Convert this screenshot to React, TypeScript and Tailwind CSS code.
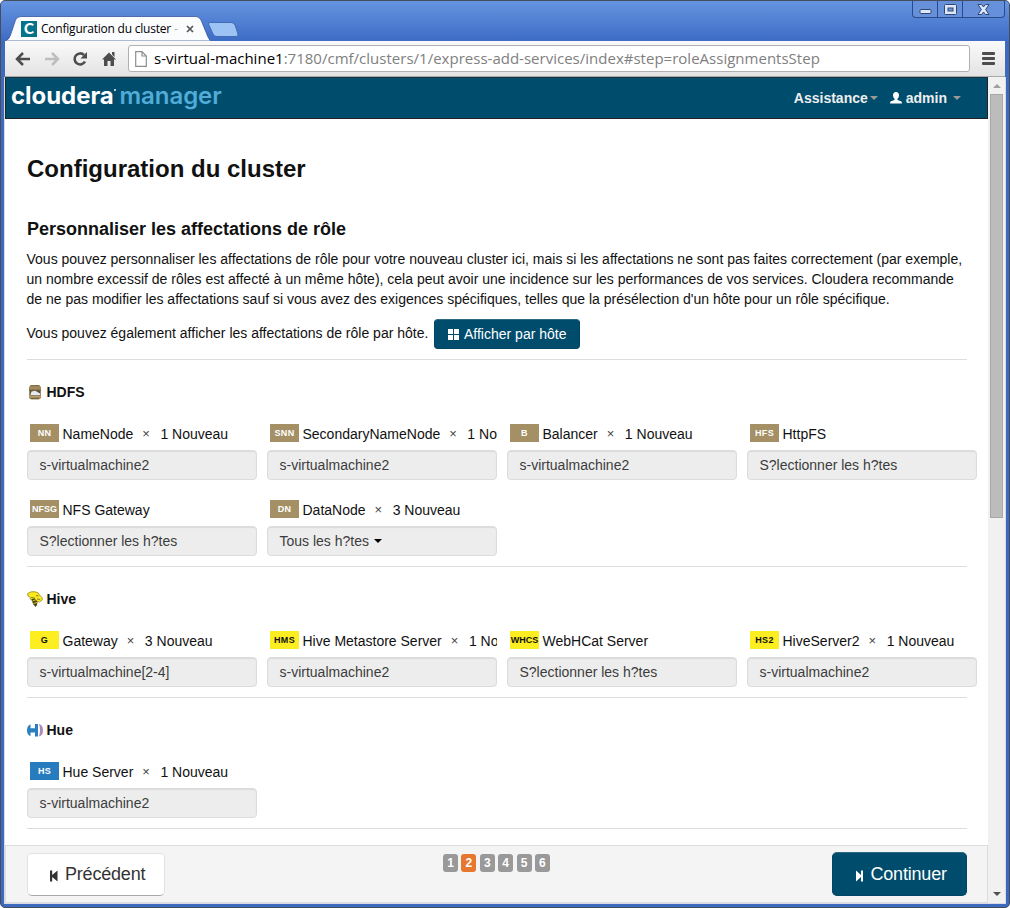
import type { ReactNode } from "react";
import clsx from "clsx";

type Role = {
  code: string;
  name: string;
  count?: string;
  hosts: string;
  menu?: boolean;
};

type Service = { title: string; icon: ReactNode; badge: string; roles: Role[] };

const HdfsIcon = () => (
  <svg width="16" height="16" viewBox="0 0 16 16">
    <path d="M4 1h8l2 2v11l-2 1.500H4L2 14V3z" fill="#a08a5e" />
    <path d="M4 1h8l1 1.300H3z" fill="#82704a" />
    <path d="M2 5.500h12V7H2z" fill="#7c6a45" />
    <path d="M3 6.500h10v5H3z" fill="#5b4f36" />
    <path d="M3.500 10.500l1-3L8 6.800l2 1 3 1.700v1.500H3.500z" fill="#e4ebf0" />
    <path d="M2 11.500h12v1.500H2z" fill="#b59d6e" />
    <path d="M4 14h8v1H4z" fill="#75633f" />
  </svg>
);

const HiveIcon = () => (
  <svg width="16" height="16" viewBox="0 0 16 16">
    <path d="M.6 2.500Q4 0 8 .8Q12 1 12.500 4L15 6.500L15.300 9L12.500 11L8.500 10L4 9L2.500 5.500L1 5z" fill="#fbe91c" stroke="#958b2b" strokeWidth=".8" />
    <path d="M4 6.500l4 .5M9 4.500l2.500.5M10 8l3 .5" stroke="#6d641d" strokeWidth=".8" />
    <path d="M4.500 8L8 7.500l2.500 3.500-.5 3-1.500 2L6 13z" fill="#4a441a" />
    <path d="M5.500 10l4-1.500M6.500 12.500l3.500-1" stroke="#eadb24" strokeWidth=".9" />
  </svg>
);

const HueIcon = () => (
  <svg width="16" height="16" viewBox="0 0 16 16">
    <path d="M3.500 2.300V6.300H8V2H11V14.500H8V10.500H3.500V14.200Q0 12.500 0 8.200Q0 4 3.500 2.300z" fill="#2a7fc0" />
    <path d="M12 2Q16 3 16 8.200Q16 13.500 12 14.500Q14 8.200 12 2z" fill="#ab8ac0" />
  </svg>
);

const services: Service[] = [
  {
    title: "HDFS",
    icon: <HdfsIcon />,
    badge: "bg-[#a49064] text-white",
    roles: [
      { code: "NN", name: "NameNode", count: "1 Nouveau", hosts: "s-virtualmachine2" },
      { code: "SNN", name: "SecondaryNameNode", count: "1 No", hosts: "s-virtualmachine2" },
      { code: "B", name: "Balancer", count: "1 Nouveau", hosts: "s-virtualmachine2" },
      { code: "HFS", name: "HttpFS", hosts: "S?lectionner les h?tes" },
      { code: "NFSG", name: "NFS Gateway", hosts: "S?lectionner les h?tes" },
      { code: "DN", name: "DataNode", count: "3 Nouveau", hosts: "Tous les h?tes", menu: true },
    ],
  },
  {
    title: "Hive",
    icon: <HiveIcon />,
    badge: "bg-[#fcee21] text-[#111]",
    roles: [
      { code: "G", name: "Gateway", count: "3 Nouveau", hosts: "s-virtualmachine[2-4]" },
      { code: "HMS", name: "Hive Metastore Server", count: "1 No", hosts: "s-virtualmachine2" },
      { code: "WHCS", name: "WebHCat Server", hosts: "S?lectionner les h?tes" },
      { code: "HS2", name: "HiveServer2", count: "1 Nouveau", hosts: "s-virtualmachine2" },
    ],
  },
  {
    title: "Hue",
    icon: <HueIcon />,
    badge: "bg-[#267cbf] text-white",
    roles: [{ code: "HS", name: "Hue Server", count: "1 Nouveau", hosts: "s-virtualmachine2" }],
  },
];

function RoleField({ role, badge }: { role: Role; badge: string }) {
  return (
    <div className="h-14 w-[230px]">
      <div className="flex h-[26px] items-start overflow-hidden pl-[3px] whitespace-nowrap">
        <span
          className={clsx(
            "flex h-[18px] w-[29px] shrink-0 items-center justify-center text-[9px] leading-[16px] font-bold",
            role.code.length < 4 && "tracking-[0.3px]",
            badge,
          )}
        >
          {role.code}
        </span>
        <span className="ml-[3.500px] leading-[20px]">{role.name}</span>
        {role.count && (
          <>
            <span className="ml-[9px] text-[13px] leading-[20px] text-[#444]">×</span>
            <span className="ml-[10.500px] leading-[20px]">{role.count}</span>
          </>
        )}
      </div>
      <div className="flex h-[30px] items-center rounded-[4px] border border-[#dcdcdc] bg-[#ededed] pl-[11.500px] text-[#3c3c3c] shadow-[inset_0_1px_1px_rgba(0,0,0,0.08)]">
        {role.hosts}
        {role.menu && <span className="ml-[5px] border-x-4 border-t-4 border-x-transparent border-t-black" />}
      </div>
    </div>
  );
}

function ServiceSection({ service }: { service: Service }) {
  return (
    <section className="w-[940px] border-b border-[#dddddd] pb-[10px]">
      <h3 className="flex h-16 items-start gap-[3.500px] pt-[22px] text-[14px] leading-5 font-bold">
        <span className="pt-[2px]">{service.icon}</span>
        {service.title}
      </h3>
      <div className="grid w-[950px] grid-cols-[repeat(4,230px)] gap-x-[10px] gap-y-5">
        {service.roles.map((r) => (
          <RoleField key={r.code} role={r} badge={service.badge} />
        ))}
      </div>
    </section>
  );
}

function TitleBar() {
  return (
    <div className="relative flex h-10 items-end bg-linear-to-b from-[#6594e0] to-[#3e6cc6]">
      <div className="relative ml-1 h-[25px] w-[206px]">
        <svg className="absolute inset-0" width="206" height="25" viewBox="0 0 206 25">
          <path d="M0 25Q4 24 5.500 19L10.500 4Q12 .5 16 .5H191Q194 .5 196 4L203 21Q205 25 206 25z" fill="#fbfcfd" stroke="#39579a" strokeWidth=".8" />
        </svg>
        <div className="relative flex h-full items-center pl-4">
          <span className="flex size-4 items-center justify-center bg-[#047389] font-['Lato',sans-serif] text-[15px] leading-none font-black text-white">C</span>
          <span className="ml-[4px] w-[137px] font-['Open_Sans',sans-serif] text-[12px] leading-5 tracking-[-0.220px] whitespace-nowrap text-black">
            Configuration du cluster <span className="text-[#aaa]">-</span>
          </span>
          <svg className="ml-2" width="8" height="8" viewBox="0 0 8 8">
            <path d="M1 1l6 6M7 1L1 7" stroke="#555" strokeWidth="1.700" />
          </svg>
        </div>
      </div>
      <svg className="mb-[3px] -ml-[4px]" width="33" height="17" viewBox="0 0 33 17">
        <path d="M3 1.500H24Q27 1.500 28 4L31 13Q31.500 15.500 29 15.500H10Q7 15.500 6 13L1.500 3Q1 1.500 3 1.500z" fill="#9dc3f5" stroke="#416cb7" />
      </svg>
      <div className="mr-1 ml-auto flex h-[17px] w-[93px] self-start rounded-b-[4px] border border-t-0 border-[#294b8b] bg-[#6690d9]">
        <div className="flex w-[25px] items-center justify-center border-r border-[#294b8b]">
          <svg width="13" height="6" viewBox="0 0 13 6" className="mt-[5px]">
            <rect x="1" y=".5" width="11" height="4" rx="1" fill="#dce8f9" stroke="#304675" />
          </svg>
        </div>
        <div className="flex w-[25px] items-center justify-center border-r border-[#294b8b]">
          <svg width="13" height="11" viewBox="0 0 13 11">
            <rect x=".5" y=".5" width="12" height="10" rx="1" fill="#dce8f9" stroke="#304675" />
            <rect x="4" y="4" width="5" height="3" fill="#7199dc" stroke="#304675" />
          </svg>
        </div>
        <div className="flex flex-1 items-center justify-center">
          <svg width="13" height="11" viewBox="0 0 13 11">
            <path d="M1 .5H4.500L6.500 3L8.500 .5H12L8.700 5.500L12 10.500H8.500L6.500 8L4.500 10.500H1L4.300 5.500z" fill="#dce8f9" stroke="#304675" />
          </svg>
        </div>
      </div>
    </div>
  );
}

function Toolbar() {
  return (
    <div className="mx-1 flex h-9 items-center border-b border-[#a9a9a9] bg-linear-to-b from-[#fafafa] to-[#e3e3e3] pl-[9.500px]">
      <svg width="16" height="14" viewBox="0 0 16 14">
        <path d="M8 1L2 7l6 6M2 7h13" fill="none" stroke="#4d4d4d" strokeWidth="2.500" />
      </svg>
      <svg className="ml-[13px]" width="16" height="14" viewBox="0 0 16 14">
        <path d="M8 1l6 6-6 6M14 7H1" fill="none" stroke="#bdbdbd" strokeWidth="2.500" />
      </svg>
      <svg className="ml-[12.500px]" width="16" height="16" viewBox="0 0 16 16">
        <path d="M13 10.500A5.500 5.500 0 1 1 12 4" fill="none" stroke="#4d4d4d" strokeWidth="2.600" />
        <path d="M15 1v6.500H8.500z" fill="#4d4d4d" />
      </svg>
      <svg className="ml-[13px]" width="16" height="16" viewBox="0 0 16 16">
        <path d="M8 1.500L15 8.500H13V15H9.500V10H6.500V15H3V8.500H1zM11 1h2.500v5L11 3.500z" fill="#4d4d4d" />
      </svg>
      <div className="ml-[11px] flex h-[27px] w-[842px] items-center rounded-[3px] border border-[#b0b0b0] bg-white pl-[6px]">
        <svg width="12" height="16" viewBox="0 0 12 16">
          <path d="M.7.7H7l4.300 4.300v10.300H.7zM7 .7V5h4.300" fill="#fff" stroke="#8e8e8e" strokeWidth="1.200" />
        </svg>
        <span className="-mt-px ml-[7px] font-['Open_Sans',sans-serif] text-[15px] leading-6 tracking-[0.010px] whitespace-nowrap text-[#808080]">
          <span className="text-black">s-virtual-machine1</span>:7180/cmf/clusters/1/express-add-services/index#step=roleAssignmentsStep
        </span>
      </div>
      <div className="ml-3 flex w-[13px] flex-col gap-[2px]">
        <span className="h-[3px] rounded-[1px] bg-[#4d4d4d]" />
        <span className="h-[3px] rounded-[1px] bg-[#4d4d4d]" />
        <span className="h-[3px] rounded-[1px] bg-[#4d4d4d]" />
      </div>
    </div>
  );
}

function AppHeader() {
  return (
    <header className="flex h-[42px] items-center border border-[#222] border-t-[#173542] bg-[#004c6d] pl-[5px] text-[14px] font-bold text-[#eeeeee]">
      <div className="-mt-[4px] flex items-start font-['Inter',sans-serif] leading-[32px]">
        <span className="w-[103px] text-[24px] font-bold tracking-[-0.050px] text-white">cloudera</span>
        <span className="mt-[9px] size-[1.500px] bg-[#b9ccd5]" />
        <span className="ml-1 text-[24px] font-semibold tracking-[-0.050px] text-[#51acd8]">manager</span>
      </div>
      <span className="ml-auto">Assistance</span>
      <span className="ml-[2px] border-x-4 border-t-4 border-x-transparent border-t-[#999]" />
      <svg className="ml-3" width="12" height="12" viewBox="0 0 12 12">
        <path d="M6 0C8 0 9 1.300 9 3.300Q9 5.500 7.500 6.800V8L11 9.300Q12 9.700 12 11.500H0Q0 9.700 1 9.300L4.500 8V6.800Q3 5.500 3 3.300C3 1.300 4 0 6 0z" fill="#fff" />
      </svg>
      <span className="ml-1">admin</span>
      <span className="mr-[26px] ml-[6px] border-x-4 border-t-4 border-x-transparent border-t-[#999]" />
    </header>
  );
}

function Footer() {
  return (
    <footer className="flex h-[58px] items-start border border-[#dcdcdc] bg-[#f4f4f4] pt-[6px] pr-5 pl-[21px]">
      <button className="mt-px flex h-[43px] w-[138px] items-center rounded-[5px] border border-[#e3e3e3] border-b-[#aaa] bg-white pl-[21.500px] text-[18px] tracking-[-0.200px] text-[#333]">
        <svg className="mt-[3px] mr-[7.500px]" width="8" height="12" viewBox="0 0 8 12">
          <path d="M0 .5h2.200v4.500L7.500.5v11L2.200 7v4.500H0z" fill="#333" />
        </svg>
        Précédent
      </button>
      <div className="mt-[2px] ml-[278px] flex gap-[3.400px] text-[12px] font-bold text-white">
        {[1, 2, 3, 4, 5, 6].map((n) => (
          <span
            key={n}
            className={clsx(
              "flex h-[18px] w-[15px] items-center justify-center rounded-[3px]",
              n === 2 ? "bg-[#e6772e]" : "bg-[#999999]",
            )}
          >
            {n}
          </span>
        ))}
      </div>
      <button className="ml-auto flex h-11 w-[135px] items-center rounded-[5px] border border-[#004563] border-t-[#2d6a85] bg-[#004c6d] pl-[23px] text-[18px] tracking-[-0.200px] text-white">
        <svg className="mt-[3px] mr-[6.500px]" width="8" height="12" viewBox="0 0 8 12">
          <path d="M0 .5L5 5V.5H7v11H5V7L0 11.500z" fill="#fff" />
        </svg>
        Continuer
      </button>
    </footer>
  );
}

export default function App() {
  return (
    <div className="flex h-[908px] w-[1010px] flex-col overflow-hidden rounded-[5px] border border-[#454c5a] bg-[#3d6abf] font-['Liberation_Sans',Arial,sans-serif] text-[14px] text-[#111111]">
      <TitleBar />
      <Toolbar />
      <div className="mx-[3px] flex h-[827px] border-x border-b border-[#d8dde5] bg-white">
        <div className="flex w-[983px] flex-col">
          <AppHeader />
          <main className="h-[726px] overflow-hidden pl-[22px]">
            <h1 className="pt-[34px] text-[24px] leading-[32px] font-bold">Configuration du cluster</h1>
            <h2 className="mt-[33px] text-[18px] leading-[22px] font-bold">Personnaliser les affectations de rôle</h2>
            <p className="mt-[9px] -ml-[0.500px] leading-5 whitespace-nowrap">
              Vous pouvez personnaliser les affectations de rôle pour votre nouveau cluster ici, mais si les affectations ne sont pas faites correctement (par exemple,
              <br />
              un nombre excessif de rôles est affecté à un même hôte), cela peut avoir une incidence sur les performances de vos services. Cloudera recommande
              <br />
              de ne pas modifier les affectations sauf si vous avez des exigences spécifiques, telles que la présélection d'un hôte pour un rôle spécifique.
            </p>
            <div className="mt-[10px] flex h-[41px] w-[940px] items-start border-b border-[#ddd]">
              <span className="-ml-[0.500px] w-[403px] pt-1 leading-5 whitespace-nowrap">Vous pouvez également afficher les affectations de rôle par hôte.</span>
              <button className="ml-[4.500px] flex h-[30px] w-[146px] items-center rounded-[4px] border border-[#004563] border-t-[#2d6a85] bg-[#004c6d] pl-[13px] text-white">
                <svg className="mr-[5px]" width="11" height="11" viewBox="0 0 11 11">
                  <path d="M0 0h5v5H0zM6 0h5v5H6zM0 6h5v5H0zM6 6h5v5H6z" fill="#fff" />
                </svg>
                Afficher par hôte
              </button>
            </div>
            {services.map((s) => (
              <ServiceSection key={s.title} service={s} />
            ))}
          </main>
          <Footer />
        </div>
        <div className="flex flex-1 flex-col items-center bg-[#f1f1f1]">
          <span className="mt-[7px] border-x-4 border-b-4 border-x-transparent border-b-[#a0a0a0]" />
          <span className="mt-[6px] h-[424px] w-[13px] border border-[#a8a8a8] bg-[#bcbcbc]" />
          <span className="mt-auto mb-[7px] border-x-4 border-t-4 border-x-transparent border-t-[#505050]" />
        </div>
      </div>
    </div>
  );
}
